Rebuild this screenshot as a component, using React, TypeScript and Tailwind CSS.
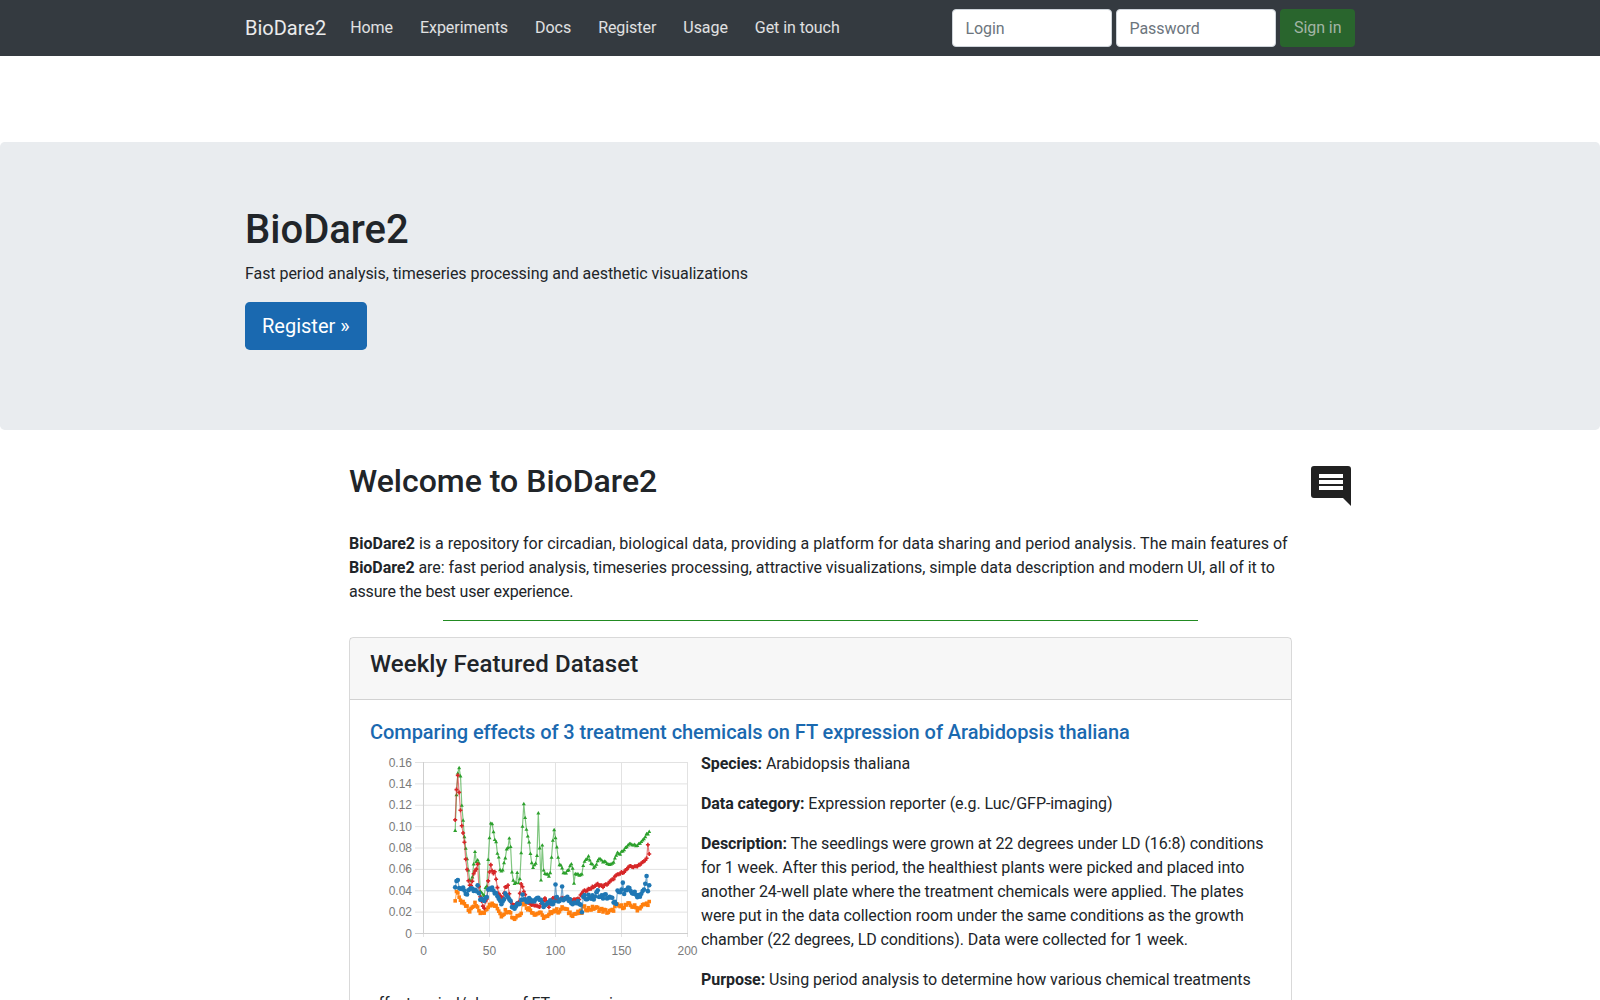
const navLinks = ["Home", "Experiments", "Docs", "Register", "Usage", "Get in touch"];

type Pt = [number, number];

const green: Pt[] = [[24,.097],[25,.13],[26,.15],[27,.156],[28,.148],[29,.12],[30,.105],[31,.09],[32,.08],[33,.07],[34,.06],[35,.05],[36,.048],[37,.052],[38,.065],[39,.076],[40,.067],[41,.068],[42,.066],[43,.04],[44,.038],[45,.036],[46,.036],[47,.043],[48,.045],[49,.07],[50,.09],[51,.104],[52,.102],[53,.095],[54,.088],[55,.085],[56,.075],[57,.072],[58,.06],[59,.059],[60,.06],[61,.067],[62,.07],[63,.08],[64,.081],[65,.09],[66,.081],[67,.058],[68,.05],[69,.047],[70,.048],[71,.057],[72,.048],[73,.052],[74,.076],[75,.1],[76,.122],[77,.108],[78,.098],[79,.092],[80,.085],[81,.075],[82,.067],[83,.062],[84,.065],[85,.066],[86,.073],[87,.113],[88,.08],[89,.049],[90,.082],[91,.06],[92,.056],[93,.055],[94,.055],[95,.053],[96,.056],[97,.072],[98,.088],[99,.097],[100,.09],[101,.08],[102,.072],[103,.065],[104,.064],[106,.057],[108,.056],[110,.06],[112,.066],[113,.062],[114,.047],[115,.056],[117,.055],[119,.054],[120,.056],[121,.063],[123,.07],[125,.072],[127,.066],[129,.062],[131,.064],[133,.071],[135,.068],[137,.067],[139,.066],[141,.064],[143,.065],[145,.07],[147,.075],[149,.074],[151,.078],[153,.08],[155,.082],[157,.084],[159,.083],[161,.082],[163,.084],[165,.086],[167,.088],[169,.093],[171,.095]];

const red: Pt[] = [[24,.107],[25,.135],[26,.148],[27,.133],[28,.116],[29,.101],[30,.093],[31,.085],[32,.07],[33,.06],[34,.05],[35,.045],[36,.044],[37,.048],[38,.056],[39,.058],[40,.06],[41,.064],[42,.044],[43,.035],[44,.03],[45,.025],[46,.024],[47,.03],[48,.033],[49,.05],[50,.058],[51,.065],[52,.058],[53,.056],[54,.058],[55,.05],[56,.043],[57,.038],[58,.036],[60,.034],[62,.043],[64,.046],[66,.03],[68,.027],[70,.027],[72,.03],[74,.047],[76,.04],[78,.032],[80,.028],[84,.027],[88,.025],[92,.033],[95,.024],[98,.034],[102,.032],[106,.033],[110,.032],[114,.032],[118,.032],[120,.038],[124,.041],[128,.043],[132,.046],[136,.044],[140,.047],[143,.05],[145,.053],[149,.056],[153,.059],[157,.063],[160,.062],[164,.065],[167,.067],[169,.07],[170,.084],[171,.074]];

const blue: Pt[] = [[24,.045],[25,.05],[26,.05],[27,.045],[29,.042],[31,.039],[33,.037],[34,.042],[36,.04],[38,.04],[40,.039],[41,.043],[43,.033],[45,.03],[47,.033],[47.5,.019],[48,.036],[49,.043],[51,.043],[53,.04],[55,.036],[57,.034],[59,.029],[61,.034],[63,.038],[65,.034],[67,.026],[69,.024],[71,.028],[73,.03],[75,.036],[77,.031],[80,.032],[84,.032],[87,.034],[90,.027],[93,.026],[96,.029],[99,.03],[100,.047],[101,.032],[104,.032],[105,.042],[106,.032],[110,.032],[114,.029],[118,.028],[120,.021],[121,.033],[125,.035],[129,.033],[132,.039],[134,.034],[138,.035],[141,.033],[144,.031],[146,.026],[147,.038],[150,.039],[151,.05],[152,.039],[155,.041],[158,.039],[161,.036],[164,.036],[167,.04],[169,.053],[170,.042],[171,.044]];

const orange: Pt[] = [[24,.032],[25,.04],[27,.036],[29,.029],[31,.027],[33,.026],[35,.02],[37,.023],[39,.028],[41,.023],[43,.02],[45,.018],[48,.024],[50,.028],[54,.026],[57,.022],[59,.017],[62,.021],[65,.022],[67,.016],[69,.014],[72,.018],[74,.02],[75,.03],[78,.025],[82,.021],[85,.018],[88,.02],[90,.016],[94,.015],[98,.022],[102,.021],[106,.024],[110,.02],[113,.018],[117,.019],[120,.02],[121,.024],[126,.023],[130,.024],[135,.022],[140,.02],[143,.021],[146,.026],[150,.025],[155,.027],[160,.025],[162,.023],[166,.026],[168,.027],[171,.029]];

// fill in every time point, with a small wobble so the trace looks like measurements
const trace = (pts: Pt[], wobble: number) => {
  const out: Pt[] = [];
  for (let x = 24; x <= 171; x++) {
    const i = pts.findIndex((p) => p[0] >= x);
    const b = pts[i] ?? pts[pts.length - 1]!;
    const a = pts[i - 1] ?? b;
    const t = b[0] === a[0] ? 0 : (x - a[0]) / (b[0] - a[0]);
    const seed = Math.sin(x * 12.9898) * 43758.5453;
    const noise = (seed - Math.floor(seed) - 0.5) * wobble;
    out.push([x, a[1] + (b[1] - a[1]) * t + noise]);
  }
  return out;
};

const px = (x: number) => 53.5 + (x / 200) * 264;
const py = (y: number) => 181.5 - (y / 0.16) * 171;
const line = (pts: Pt[]) => pts.map((p) => `${px(p[0]).toFixed(1)},${py(p[1]).toFixed(1)}`).join(" ");

const yTicks = [0, 0.02, 0.04, 0.06, 0.08, 0.1, 0.12, 0.14, 0.16];
const xTicks = [0, 50, 100, 150, 200];

const Chart = () => {
  const g = trace(green, 0.002);
  const o = trace(orange, 0.004);
  const r = trace(red, 0.002);
  const b = trace(blue, 0.005);
  return (
    <svg className="float-left mb-2" width="331" height="216" viewBox="0 0 331 216">
      {yTicks.map((t) => (
        <g key={t}>
          <line x1="45" x2="318" y1={py(t)} y2={py(t)} stroke="#e2e2e2" strokeWidth="1" />
          <text x="42" y={py(t) + 4} textAnchor="end" fontSize="12" letterSpacing="0" fill="#7a7a7a" fontFamily="Liberation Sans, sans-serif">
            {t === 0 ? "0" : t.toFixed(2)}
          </text>
        </g>
      ))}
      {xTicks.map((t) => (
        <g key={t}>
          <line x1={px(t)} x2={px(t)} y1="10" y2="185" stroke="#e2e2e2" strokeWidth="1" />
          <text x={px(t)} y="203" textAnchor="middle" fontSize="12" letterSpacing="0" fill="#7a7a7a" fontFamily="Liberation Sans, sans-serif">
            {t}
          </text>
        </g>
      ))}
      <line x1="53.5" x2="53.5" y1="10" y2="182" stroke="#cfcfcf" />
      <line x1="45" x2="318" y1="181.5" y2="181.5" stroke="#cfcfcf" />

      <polyline points={line(g)} fill="none" stroke="#2ca02c" strokeWidth="1.2" strokeOpacity="0.6" />
      {g.map((p) => (
        <path key={p[0]} d={`M${px(p[0])} ${py(p[1]) - 2}l2 3.4h-4z`} fill="#2ca02c" />
      ))}
      <polyline points={line(o)} fill="none" stroke="#ff7f0e" strokeWidth="1.2" strokeOpacity="0.6" />
      {o.map((p) => (
        <rect key={p[0]} x={px(p[0]) - 1.8} y={py(p[1]) - 1.8} width="3.6" height="3.6" fill="#ff7f0e" />
      ))}
      <polyline points={line(r)} fill="none" stroke="#d62728" strokeWidth="1.2" strokeOpacity="0.6" />
      {r.map((p) => (
        <path key={p[0]} d={`M${px(p[0]) - 2} ${py(p[1])}h4M${px(p[0])} ${py(p[1]) - 2}v4`} stroke="#d62728" strokeWidth="1.6" />
      ))}
      <polyline points={line(b)} fill="none" stroke="#1f77b4" strokeWidth="1.2" strokeOpacity="0.6" />
      {b.map((p) => (
        <circle key={p[0]} cx={px(p[0])} cy={py(p[1])} r="2.3" fill="#1f77b4" />
      ))}
    </svg>
  );
};

const CommentIcon = () => (
  <svg className="mt-1 ml-[19px] shrink-0" width="40" height="40" viewBox="0 0 40 40">
    <path d="M3 0h34a3 3 0 0 1 3 3v37l-8-8H3a3 3 0 0 1-3-3V3a3 3 0 0 1 3-3z" fill="#212121" />
    <path d="M8 8h24v4H8zM8 14h24v4H8zM8 20h24v4H8z" fill="#fff" />
  </svg>
);

export default function App() {
  return (
    <div className="h-[1000px] overflow-hidden bg-white font-['Roboto',sans-serif] text-base leading-6 tracking-[-0.055px] text-[#212529]">
      <nav className="h-14 bg-[#343a40]">
        <div className="mx-auto flex h-full w-[1110px] items-center">
          <span className="mr-4 text-xl tracking-normal text-white/90">BioDare2</span>
          <ul className="flex gap-[11px]">
            {navLinks.map((link) => (
              <li key={link} className="px-2 py-2 text-white/85">
                {link}
              </li>
            ))}
          </ul>
          <form className="ml-auto flex gap-1">
            <input
              className="h-[38px] w-40 rounded border border-[#ced4da] bg-white px-3 outline-none placeholder:text-[#6c757d]"
              placeholder="Login"
            />
            <input
              className="h-[38px] w-40 rounded border border-[#ced4da] bg-white px-3 outline-none placeholder:text-[#6c757d]"
              placeholder="Password"
            />
            <button className="h-[38px] rounded bg-[#29652d] px-[13.5px] text-[#a3b5a5]" type="button">
              Sign in
            </button>
          </form>
        </div>
      </nav>

      <section className="mt-[86px] rounded-[4.8px] bg-[#e9ecef] py-16">
        <div className="mx-auto w-[1110px]">
          <h1 className="mb-2 text-[40px] leading-[48px] font-medium tracking-normal">BioDare2</h1>
          <p className="mb-4">Fast period analysis, timeseries processing and aesthetic visualizations</p>
          <p className="mb-4">
            <a className="inline-block rounded-[4.8px] bg-[#1a69b0] px-[17px] py-[9px] text-xl leading-[30px] tracking-normal text-white" href="#">
              Register »
            </a>
          </p>
        </div>
      </section>

      <div className="mx-auto mt-8 flex w-[1140px] items-start pl-[119px]">
        <main className="w-[943px] shrink-0">
          <h2 className="mb-8 text-[32px] leading-[38px] font-medium tracking-normal">Welcome to BioDare2</h2>
          <p>
            <span className="tracking-normal">
              <strong>BioDare2</strong> is a repository for circadian, biological data, providing a platform for data
              sharing and period analysis. The main features of
            </span>{" "}
            <strong>BioDare2</strong> are: fast period analysis, timeseries processing, attractive visualizations,
            simple data description and modern UI, all of it to <span className="tracking-[-0.17px]">assure the best user experience.</span>
          </p>
          <hr className="mx-auto mt-4 mb-4 w-4/5 border-0 border-t border-t-[#228b22]" />
          <div className="rounded border border-black/15">
            <div className="border-b border-black/15 bg-black/[0.03] px-5 pt-3 pb-5">
              <h4 className="text-2xl leading-[29px] font-medium tracking-[0.09px]">Weekly Featured Dataset</h4>
            </div>
            <div className="p-5">
              <h5 className="mb-2 text-xl leading-6 font-medium text-[#1a69b0]">
                Comparing effects of 3 treatment chemicals on FT expression of Arabidopsis thaliana
              </h5>
              <Chart />
              <p className="mb-4">
                <strong>Species:</strong> Arabidopsis thaliana
              </p>
              <p className="mb-4 tracking-[-0.08px]">
                <strong>Data category:</strong> Expression reporter (e.g. Luc/GFP-imaging)
              </p>
              <p className="mb-4 tracking-[-0.08px]">
                <strong>Description:</strong> The seedlings were grown at 22 degrees under LD (16:8) conditions for 1
                week. After this period, the healthiest plants were picked and placed into another 24-well plate where
                the treatment chemicals were applied. The plates were put in the data collection room under the same
                conditions as the growth chamber (22 degrees, LD conditions). Data were collected for 1 week.
              </p>
              <p className="mb-4">
                <strong>Purpose:</strong> Using period analysis to determine how various chemical treatments effect
                period/phase of FT expression.
              </p>
            </div>
          </div>
        </main>
        <CommentIcon />
      </div>
    </div>
  );
}
